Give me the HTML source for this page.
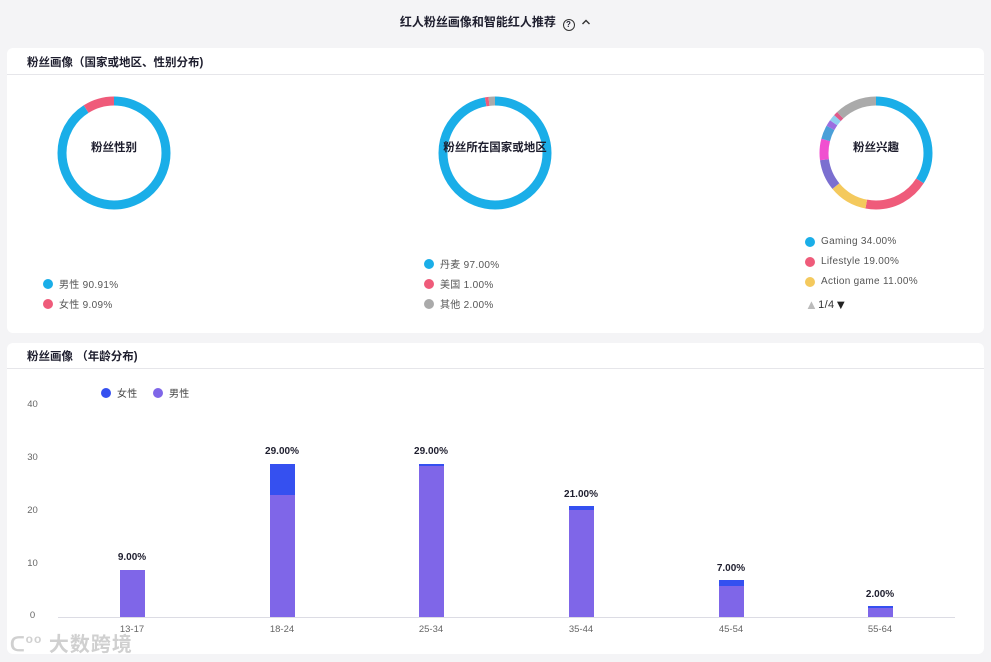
<!DOCTYPE html>
<html><head><meta charset="utf-8"><style>
*{margin:0;padding:0;box-sizing:border-box}
body{width:991px;height:662px;background:#f4f4f6;font-family:"Liberation Sans","Noto Sans CJK SC",sans-serif;position:relative;overflow:hidden;color:#222}
.abs{position:absolute}
.card{position:absolute;left:7px;width:977px;background:#fff;border-radius:6px}
.hd{position:absolute;left:20px;font-size:11.5px;font-weight:bold;color:#1e1e2e}
.line{position:absolute;left:0;right:0;height:1px;background:#e6e6ea}
.lg{position:absolute;font-size:10px;color:#555;display:flex;align-items:center;letter-spacing:.3px}
.dot{width:10px;height:10px;border-radius:50%;margin-right:6px;display:inline-block}
.ctr{position:absolute;font-size:11.5px;font-weight:bold;color:#1e1e2e;transform:translate(-50%,-50%);white-space:nowrap}
.yl{position:absolute;left:20px;width:25px;font-size:9.5px;color:#666;text-align:center}
.xl{position:absolute;font-size:9.5px;color:#666;transform:translateX(-50%)}
.bv{position:absolute;font-size:10px;font-weight:bold;color:#1e1e2e;transform:translateX(-50%)}
.bar{position:absolute;width:25px}
</style></head><body>
<div class="abs" style="left:0;width:991px;top:13px;text-align:center;font-size:12px;font-weight:bold;color:#1e1e2e">红人粉丝画像和智能红人推荐 &nbsp;<span style="display:inline-block;width:12px;height:12px;border:1.2px solid #333;border-radius:50%;font-size:8px;line-height:10px;vertical-align:-1px">?</span>&nbsp;&nbsp;<svg width="10" height="8" viewBox="0 0 10 8" style="vertical-align:0"><path d="M1.5 6 L5 2.5 L8.5 6" fill="none" stroke="#333" stroke-width="1.4"/></svg></div>

<div class="card" style="top:48px;height:285px">
  <div class="hd" style="top:6px">粉丝画像（国家或地区、性别分布)</div>
  <div class="line" style="top:26px"></div>
</div>
<svg class="abs" style="left:0;top:0" width="991" height="340">
  <g transform="translate(114,153) rotate(-90)" fill="none" stroke-width="9">
    <circle r="52" stroke="#1aaee8" stroke-dasharray="297 400"/>
    <circle r="52" stroke="#ef5b7a" stroke-dasharray="0 297 29.7 400"/>
  </g>
  <g transform="translate(495,153) rotate(-90)" fill="none" stroke-width="9">
    <circle r="52" stroke="#1aaee8" stroke-dasharray="317 400"/>
    <circle r="52" stroke="#ef5b7a" stroke-dasharray="0 317 3.3 400"/>
    <circle r="52" stroke="#aaa" stroke-dasharray="0 320.3 6.5 400"/>
  </g>
  <g transform="translate(876,153) rotate(-90)" fill="none" stroke-width="9">
    <circle r="52" stroke="#1aaee8" stroke-dasharray="111 400"/>
    <circle r="52" stroke="#ef5b7a" stroke-dasharray="0 111 62 400"/>
    <circle r="52" stroke="#f4c95d" stroke-dasharray="0 173 36 400"/>
    <circle r="52" stroke="#7b6fd0" stroke-dasharray="0 209 29 400"/>
    <circle r="52" stroke="#f050d0" stroke-dasharray="0 238 20 400"/>
    <circle r="52" stroke="#4a9fd8" stroke-dasharray="0 258 13 400"/>
    <circle r="52" stroke="#9b6fe0" stroke-dasharray="0 271 6 400"/>
    <circle r="52" stroke="#8fd0f0" stroke-dasharray="0 277 6 400"/>
    <circle r="52" stroke="#e05a8a" stroke-dasharray="0 283 4 400"/>
    <circle r="52" stroke="#aaa" stroke-dasharray="0 287 40 400"/>
  </g>
</svg>
<div class="ctr" style="left:114px;top:147px">粉丝性别</div>
<div class="ctr" style="left:495px;top:147px">粉丝所在国家或地区</div>
<div class="ctr" style="left:876px;top:147px">粉丝兴趣</div>

<div class="lg" style="left:43px;top:276px"><span class="dot" style="background:#1aaee8"></span>男性 90.91%</div>
<div class="lg" style="left:43px;top:296px"><span class="dot" style="background:#ef5b7a"></span>女性 9.09%</div>
<div class="lg" style="left:424px;top:256px"><span class="dot" style="background:#1aaee8"></span>丹麦 97.00%</div>
<div class="lg" style="left:424px;top:276px"><span class="dot" style="background:#ef5b7a"></span>美国 1.00%</div>
<div class="lg" style="left:424px;top:296px"><span class="dot" style="background:#aaa"></span>其他 2.00%</div>
<div class="lg" style="left:805px;top:236px"><span class="dot" style="background:#1aaee8"></span>Gaming 34.00%</div>
<div class="lg" style="left:805px;top:256px"><span class="dot" style="background:#ef5b7a"></span>Lifestyle 19.00%</div>
<div class="lg" style="left:805px;top:276px"><span class="dot" style="background:#f4c95d"></span>Action game 11.00%</div>
<div class="lg" style="left:805px;top:297px;font-size:11px;color:#333"><span style="color:#bbb;font-size:13px">▲</span>1/4<span style="color:#222;font-size:13px">▼</span></div>

<div class="card" style="top:343px;height:311px">
  <div class="hd" style="top:5px">粉丝画像 （年龄分布)</div>
  <div class="line" style="top:25px"></div>
</div>
<div class="lg" style="left:101px;top:385px;color:#444"><span class="dot" style="background:#3550f0"></span>女性</div>
<div class="lg" style="left:153px;top:385px;color:#444"><span class="dot" style="background:#7f66e8"></span>男性</div>
<div class="yl" style="top:399px">40</div>
<div class="yl" style="top:452px">30</div>
<div class="yl" style="top:505px">20</div>
<div class="yl" style="top:558px">10</div>
<div class="yl" style="top:610px">0</div>
<div class="abs" style="left:58px;width:897px;top:617px;height:1px;background:#dcdce4"></div>

<div class="bar" style="left:120px;top:570px;height:47px;background:#7f66e8"></div>
<div class="bar" style="left:270px;top:464px;height:31px;background:#3550f0"></div>
<div class="bar" style="left:270px;top:495px;height:122px;background:#7f66e8"></div>
<div class="bar" style="left:419px;top:464px;height:2px;background:#3550f0"></div>
<div class="bar" style="left:419px;top:466px;height:151px;background:#7f66e8"></div>
<div class="bar" style="left:569px;top:506px;height:4px;background:#3550f0"></div>
<div class="bar" style="left:569px;top:510px;height:107px;background:#7f66e8"></div>
<div class="bar" style="left:719px;top:580px;height:6px;background:#3550f0"></div>
<div class="bar" style="left:719px;top:586px;height:31px;background:#7f66e8"></div>
<div class="bar" style="left:868px;top:606px;height:2px;background:#3550f0"></div>
<div class="bar" style="left:868px;top:608px;height:9px;background:#7f66e8"></div>

<div class="bv" style="left:132px;top:552px">9.00%</div>
<div class="bv" style="left:282px;top:446px">29.00%</div>
<div class="bv" style="left:431px;top:446px">29.00%</div>
<div class="bv" style="left:581px;top:489px">21.00%</div>
<div class="bv" style="left:731px;top:563px">7.00%</div>
<div class="bv" style="left:880px;top:589px">2.00%</div>

<div class="xl" style="left:132px;top:624px">13-17</div>
<div class="xl" style="left:282px;top:624px">18-24</div>
<div class="xl" style="left:431px;top:624px">25-34</div>
<div class="xl" style="left:581px;top:624px">35-44</div>
<div class="xl" style="left:731px;top:624px">45-54</div>
<div class="xl" style="left:880px;top:624px">55-64</div>

<div class="abs" style="left:10px;top:628px;font-size:20px;font-weight:bold;color:rgba(200,200,200,.85);letter-spacing:1px">ᑕ<span style="font-size:12px;vertical-align:8px">oo</span> 大数跨境</div>
</body></html>
